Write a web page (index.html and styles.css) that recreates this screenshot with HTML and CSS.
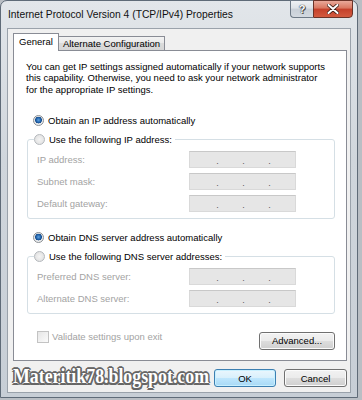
FILE: index.html
```html
<!DOCTYPE html>
<html>
<head>
<meta charset="utf-8">
<link rel="stylesheet" href="styles.css">
</head>
<body>
<div class="window">
  <div class="titlebar">
    <span class="title">Internet Protocol Version 4 (TCP/IPv4) Properties</span>
    <div class="caption-btns">
      <div class="cbtn help">?</div>
      <div class="cbtn close">
        <svg width="12" height="10" viewBox="0 0 12 10"><path d="M1.5 1 L10.5 9 M10.5 1 L1.5 9" stroke="#3a1a12" stroke-width="3.6" stroke-linecap="round"/><path d="M1.5 1 L10.5 9 M10.5 1 L1.5 9" stroke="#ffffff" stroke-width="2" stroke-linecap="round"/></svg>
      </div>
    </div>
  </div>
  <div class="client">
    <div class="tabs">
      <div class="tab active">General</div>
      <div class="tab">Alternate Configuration</div>
    </div>
    <div class="panel">
      <p class="intro">You can get IP settings assigned automatically if your network supports<br>this capability. Otherwise, you need to ask your network administrator<br>for the appropriate IP settings.</p>
      <div class="radio-row first"><span class="radio on"></span>Obtain an IP address automatically</div>
      <fieldset class="group">
        <legend><span class="radio"></span>Use the following IP address:</legend>
        <div class="field-row"><span class="lbl">IP address:</span><div class="ip"><span class="dot">.</span><span class="dot">.</span><span class="dot">.</span></div></div>
        <div class="field-row"><span class="lbl">Subnet mask:</span><div class="ip"><span class="dot">.</span><span class="dot">.</span><span class="dot">.</span></div></div>
        <div class="field-row"><span class="lbl">Default gateway:</span><div class="ip"><span class="dot">.</span><span class="dot">.</span><span class="dot">.</span></div></div>
      </fieldset>
      <div class="radio-row second"><span class="radio on"></span>Obtain DNS server address automatically</div>
      <fieldset class="group">
        <legend><span class="radio"></span>Use the following DNS server addresses:</legend>
        <div class="field-row"><span class="lbl">Preferred DNS server:</span><div class="ip"><span class="dot">.</span><span class="dot">.</span><span class="dot">.</span></div></div>
        <div class="field-row"><span class="lbl">Alternate DNS server:</span><div class="ip"><span class="dot">.</span><span class="dot">.</span><span class="dot">.</span></div></div>
      </fieldset>
      <div class="bottom-row">
        <div class="check"><span class="box"></span>Validate settings upon exit</div>
        <div class="btn adv">Advanced...</div>
      </div>
    </div>
    <div class="footer">
      <div class="wm-wrap"><span class="watermark">Materitik78.blogspot.com</span></div>
      <div class="btn ok">OK</div>
      <div class="btn cancel">Cancel</div>
    </div>
  </div>
</div>
</body>
</html>
```
FILE: styles.css
```css
* { box-sizing: border-box; }
html, body { margin: 0; padding: 0; }
body {
  width: 362px;
  height: 400px;
  overflow: hidden;
  background: #b9bec4;
  font-family: "Liberation Sans", Arial, sans-serif;
  font-size: 9.5px;
  color: #000;
}
.window {
  width: 358px;
  height: 398px;
  border: 1px solid #5f6b78;
  border-radius: 7px 7px 0 0;
  background: linear-gradient(#e2e6ea, #d0d6dc 40%, #c7ced6);
  padding: 0 6px 4px 6px;
  display: flex;
  flex-direction: column;
}
.titlebar {
  height: 27px;
  display: flex;
  align-items: center;
}
.title {
  margin-left: 1px;
  font-size: 10.3px;
  color: #111;
}
.caption-btns {
  margin-left: auto;
  margin-right: -2px;
  align-self: flex-start;
  margin-top: -1px;
  display: flex;
}
.cbtn {
  height: 18px;
  display: flex;
  align-items: center;
  justify-content: center;
}
.help {
  width: 23px;
  border: 1px solid #6d7986;
  border-right: none;
  border-radius: 0 0 0 4px;
  background: linear-gradient(#eef1f4, #dde2e7 45%, #c8cfd7 50%, #d3d9e0);
  color: #fff;
  font-weight: bold;
  font-size: 11px;
  text-shadow: 0 0 1px #333, 0 0 1px #333, 1px 1px 0 #555;
}
.close {
  width: 40px;
  border: 1px solid #6b3328;
  border-radius: 0 0 4px 0;
  background: linear-gradient(#e9a99a, #d9765f 45%, #c4402a 50%, #d35a3f);
}
.client {
  flex: 1;
  background: #f0f0f0;
  border: 1px solid #9aa2ab;
  display: flex;
  flex-direction: column;
}
.tabs {
  display: flex;
  align-items: flex-end;
  margin: 4px 0 0 5px;
  height: 17px;
}
.tab {
  height: 14px;
  border: 1px solid #898c95;
  border-bottom: none;
  background: linear-gradient(#f3f3f3, #e9e9e9 50%, #dbdbdb 50%, #d6d6d6);
  display: flex;
  align-items: center;
  justify-content: center;
  width: 106px;
  border-left: none;
}
.tab.active {
  height: 18px;
  margin-bottom: -1px;
  width: 46px;
  background: #fff;
  border-left: 1px solid #898c95;
  position: relative;
  z-index: 1;
  padding-bottom: 2px;
}
.panel {
  margin-left: 5px;
  width: 334px;
  height: 311px;
  background: #fff;
  border: 1px solid #898c95;
  padding: 10px 11px 0 12px;
}
.intro {
  margin: 0;
  line-height: 11.3px;
}
.radio-row {
  display: flex;
  align-items: center;
  height: 13px;
  margin-left: 7px;
}
.radio-row.first { margin-top: 19px; }
.radio-row.second { margin-top: 12px; }
.radio {
  width: 11px;
  height: 11px;
  border-radius: 50%;
  border: 1px solid #b4b8bc;
  background: radial-gradient(circle at 50% 50%, #f4f4f4, #dcdcdc);
  margin-right: 4px;
  flex: none;
}
.radio.on {
  border-color: #8a8f94;
  background: radial-gradient(circle at 50% 45%, #5fa3e0 0, #1e5fa8 2.4px, #194f8c 3.2px, #e4e6e8 3.6px, #f2f2f2 5px);
}
.group {
  margin: 6px 0 0 1px;
  padding: 0 0 6px 0;
  border: 1px solid #d5dfe5;
  border-radius: 3px;
  min-width: 0;
}
.group legend {
  margin-left: 6px;
  padding: 0 3px 0 0;
  height: 13px;
  display: flex;
  align-items: center;
}
.field-row {
  display: flex;
  align-items: center;
  height: 17px;
  padding-left: 9px;
  margin-top: 5px;
}
.lbl {
  width: 152px;
  color: #a3a3a3;
}
.ip {
  width: 107px;
  height: 17px;
  border: 1px solid #d9d9d9;
  border-top-color: #c8c8c8;
  background-color: #efefef;
  background-image: radial-gradient(#dcdcdc 0.6px, transparent 0.8px);
  background-size: 2px 2px;
  display: flex;
  align-items: flex-end;
  padding-left: 26px;
  gap: 23px;
}
.dot {
  width: 3px;
  font-size: 9px;
  line-height: 12px;
  color: #555;
  text-align: center;
}
.bottom-row {
  display: flex;
  justify-content: space-between;
  align-items: flex-start;
  margin-top: 17px;
}
.check {
  display: flex;
  align-items: center;
  margin-left: 11px;
  color: #a3a3a3;
  height: 12px;
}
.box {
  width: 12px;
  height: 12px;
  border: 1px solid #c3c3c3;
  background: linear-gradient(135deg, #e6e6e6, #fbfbfb);
  margin-right: 3px;
}
.btn {
  height: 18px;
  border: 1px solid #707070;
  border-radius: 3px;
  background: linear-gradient(#f2f2f2, #ebebeb 48%, #dddddd 52%, #cfcfcf);
  box-shadow: inset 0 0 0 1px #fbfbfb;
  display: flex;
  align-items: center;
  justify-content: center;
  color: #000;
}
.adv {
  width: 76px;
  margin-top: 1px;
}
.footer {
  display: flex;
  align-items: center;
  margin-top: 7px;
  height: 20px;
}
.wm-wrap {
  flex: 1;
  margin-left: 5px;
  height: 20px;
  position: relative;
}
.watermark {
  position: absolute;
  left: 0;
  top: -5px;
  font-family: "Liberation Serif", serif;
  font-weight: bold;
  font-size: 22px;
  color: #fff;
  white-space: nowrap;
  transform: scaleX(0.81);
  transform-origin: left center;
  text-shadow:
    1px 0 0 #666, -1px 0 0 #666, 0 1px 0 #666, 0 -1px 0 #666,
    1.5px 1.5px 0 #666, -1.5px -1.5px 0 #666, 1.5px -1.5px 0 #666, -1.5px 1.5px 0 #666,
    2px 0 0 #777, -2px 0 0 #777, 0 2px 0 #777, 0 -2px 0 #777;
}
.ok {
  width: 62px;
  border-color: #3c7fb1;
  background: linear-gradient(#eaf6fd, #d9f0fc 48%, #bee6fd 52%, #a7d9f5);
  box-shadow: inset 0 0 0 1px #c8f0ff;
  margin-right: 8px;
}
.cancel {
  width: 63px;
  margin-right: 3px;
}
```
